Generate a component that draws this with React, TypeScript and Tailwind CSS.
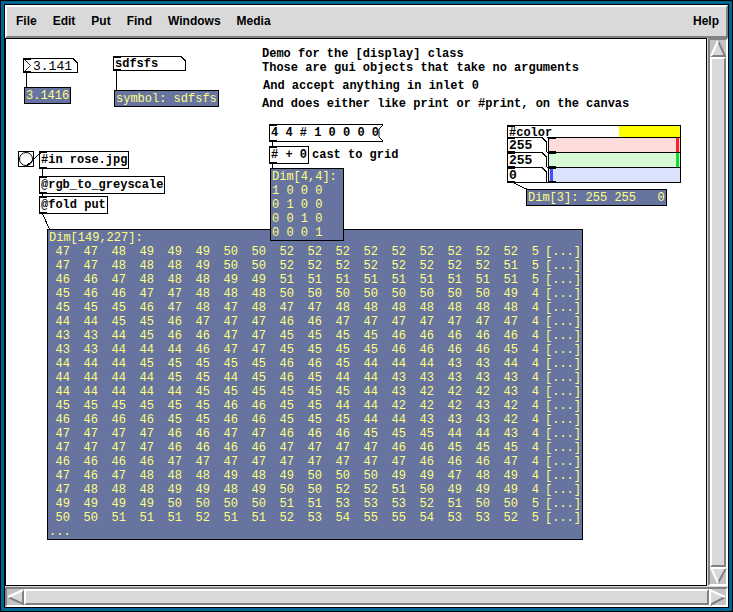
import React from 'react';
import clsx from 'clsx';

const MENUS = ['File', 'Edit', 'Put', 'Find', 'Windows', 'Media'];

const GRID_ROWS = [
  '47 47 48 49 49 49 50 50 52 52 52 52 52 52 52 52 52 5',
  '47 47 48 48 48 49 50 50 52 52 52 52 52 52 52 52 51 5',
  '46 46 47 48 48 48 49 49 51 51 51 51 51 51 51 51 51 5',
  '45 46 46 47 47 48 48 48 50 50 50 50 50 50 50 50 49 4',
  '45 45 45 46 47 48 47 48 47 47 48 48 48 48 48 48 48 4',
  '44 44 45 45 46 47 47 47 46 46 47 47 47 47 47 47 47 4',
  '43 43 44 45 46 46 47 47 45 45 45 45 46 46 46 46 46 4',
  '43 43 44 44 44 46 47 47 45 45 45 45 46 46 46 46 45 4',
  '44 44 44 45 45 45 45 45 46 46 45 44 44 44 43 43 44 4',
  '44 44 44 44 45 45 44 45 46 45 44 44 43 43 43 43 43 4',
  '44 44 44 44 44 45 45 45 45 45 45 44 43 42 42 42 43 4',
  '45 45 45 45 45 45 46 46 45 45 44 44 42 42 42 43 42 4',
  '46 46 46 46 45 45 46 46 45 45 45 44 44 43 43 43 42 4',
  '47 47 47 47 46 46 47 47 46 46 46 45 45 45 44 44 43 4',
  '47 47 47 47 46 46 46 46 47 47 47 47 46 46 45 45 45 4',
  '46 46 46 46 47 47 47 47 47 47 47 47 47 46 46 46 47 4',
  '47 46 47 48 48 48 49 48 49 50 50 50 49 49 47 48 49 4',
  '47 48 48 48 49 49 48 49 50 50 52 52 51 50 49 49 49 4',
  '49 49 49 49 50 50 50 50 51 51 53 53 53 52 51 50 50 5',
  '50 50 51 51 51 52 51 51 52 53 54 55 55 54 53 53 52 5',
].map((row) => row.split(' '));

const CHANNELS = [
  {
    name: 'red',
    value: 255,
    track: 'bg-[#fddcdc]',
    thumb: '[&::-webkit-slider-thumb]:bg-[#ff2020]',
  },
  {
    name: 'green',
    value: 255,
    track: 'bg-[#d8fad8]',
    thumb: '[&::-webkit-slider-thumb]:bg-[#10e020]',
  },
  {
    name: 'blue',
    value: 0,
    track: 'bg-[#dae2fc]',
    thumb: '[&::-webkit-slider-thumb]:bg-[#4050ff]',
  },
];

// from x, from y, to x, to y on the canvas
const WIRES = [
  [20, 34, 20, 48],
  [110, 32, 110, 51],
  [20, 127, 35, 113],
  [36, 130, 36, 137],
  [36, 155, 36, 157],
  [36, 175, 43, 190],
  [266, 103, 266, 107],
  [266, 125, 266, 129],
  [505, 143, 520, 150],
];

const Xlets = () => (
  <>
    <span className="absolute left-0 top-0 h-px w-[7px] bg-black" />
    <span className="absolute bottom-0 left-0 h-px w-[7px] bg-black" />
  </>
);

// cut top right corner of an atom box
const Notch = () => (
  <svg className="absolute -right-px -top-px" width="5" height="5" shapeRendering="crispEdges">
    <path d="M0 0H5V5Z" fill="#fff" />
    <path d="M0 0.5L4.5 5" stroke="#000" fill="none" />
  </svg>
);

type BoxProps = {
  className?: string;
  children: React.ReactNode;
};

const ObjectBox = ({ className, children }: BoxProps) => (
  <div
    className={clsx(
      'absolute h-[18px] whitespace-pre border border-black bg-white px-px font-bold leading-4',
      className
    )}
  >
    <Xlets />
    {children}
  </div>
);

const Comment = ({ className, children }: BoxProps) => (
  <p className={clsx('absolute whitespace-pre font-bold leading-[14px]', className)}>{children}</p>
);

const Display = ({ className, children }: BoxProps) => (
  <output
    className={clsx(
      'absolute block whitespace-pre border border-black bg-[#6774a0] px-px pt-px leading-[14px] text-[#ffff80]',
      className
    )}
  >
    {children}
  </output>
);

type ArrowProps = {
  label: string;
  points: string;
  light: string;
  dark: string;
};

const ArrowButton = ({ label, points, light, dark }: ArrowProps) => (
  <button aria-label={label} className="block h-[17px] w-[17px] shrink-0">
    <svg width="17" height="17" viewBox="0 0 17 17" fill="none" strokeWidth="2">
      <polygon points={points} fill="#d9d9d9" />
      <path d={dark} stroke="#828282" />
      <path d={light} stroke="#fff" />
    </svg>
  </button>
);

const Thumb = () => (
  <div className="flex-1 border-2 border-b-[#828282] border-l-white border-r-[#828282] border-t-white bg-[#d9d9d9]" />
);

const ColorPicker = () => (
  <div className="absolute left-[501px] top-[86px] w-[174px] border border-black bg-white font-bold">
    <Xlets />
    <div className="flex h-3 border-b border-black">
      <span className="flex-1 pl-px leading-[15px]">#color</span>
      <span className="w-[61px] bg-[#ffff00]" />
    </div>
    {CHANNELS.map((channel, i) => (
      <div
        key={channel.name}
        className={clsx('flex', i < 2 ? 'h-[15px] border-b border-black' : 'h-[14px]')}
      >
        <div className="relative w-[39px] border-r border-black">
          <Xlets />
          <input
            aria-label={`${channel.name} value`}
            defaultValue={channel.value}
            className="block h-[14px] w-full bg-transparent px-px pt-px text-[13px] leading-[13px] outline-none"
          />
          <Notch />
        </div>
        <div className={clsx('relative ml-px flex-1 border-l border-black px-px', channel.track)}>
          <Xlets />
          <input
            type="range"
            aria-label={channel.name}
            min={0}
            max={255}
            defaultValue={channel.value}
            className={clsx(
              'block h-full w-full appearance-none bg-transparent outline-none [&::-webkit-slider-thumb]:h-[14px] [&::-webkit-slider-thumb]:w-[3px] [&::-webkit-slider-thumb]:appearance-none',
              channel.thumb
            )}
          />
        </div>
      </div>
    ))}
  </div>
);

const GridDump = () => (
  <div className="absolute left-[41px] top-[190px] w-[536px] border border-black bg-[#6774a0] px-px pt-px leading-[14px] text-[#ffff80]">
    <p>Dim[149,227]:</p>
    <table className="table-fixed border-collapse">
      <tbody>
        {GRID_ROWS.map((row, y) => (
          <tr key={y}>
            {row.map((value, x) => (
              <td
                key={x}
                className={clsx(
                  'h-[14px] p-0 text-right',
                  x === 0 || x === row.length - 1 ? 'w-[21px] min-w-[21px]' : 'w-7 min-w-7'
                )}
              >
                {value}
              </td>
            ))}
            <td className="h-[14px] w-[42px] min-w-[42px] p-0 text-right">[...]</td>
          </tr>
        ))}
      </tbody>
    </table>
    <p>...</p>
  </div>
);

const Canvas = () => (
  <main className="relative flex-1 overflow-hidden border border-black bg-white font-['Liberation_Mono',monospace] text-[12px] text-black">
    <div className="absolute left-[17px] top-[19px] h-[15px] w-[55px] border border-black bg-[#fcfcfc]">
      <Xlets />
      <svg className="absolute left-0 top-0" width="8" height="13" fill="none" stroke="#000">
        <path d="M0.5 0.5L6.5 6.5L0.5 12.5" strokeWidth="0.8" />
      </svg>
      <input
        aria-label="number"
        defaultValue="3.141"
        className="block h-[13px] w-full bg-transparent pl-[9px] pt-px text-[13px] leading-3 outline-none"
      />
      <Notch />
    </div>
    <Display className="left-[18px] top-12">3.1416</Display>

    <div className="absolute left-[107px] top-[17px] h-[15px] w-[73px] border border-black bg-white">
      <Xlets />
      <input
        aria-label="symbol"
        defaultValue="sdfsfs"
        className="block h-[13px] w-full bg-transparent px-px pt-px font-bold leading-3 outline-none"
      />
      <Notch />
    </div>
    <Display className="left-[108px] top-[51px]">symbol: sdfsfs</Display>

    <Comment className="left-64 top-2">
      {'Demo for the [display] class\nThose are gui objects that take no arguments'}
    </Comment>
    <Comment className="left-[257px] top-10">And accept anything in inlet 0</Comment>
    <Comment className="left-64 top-[58px]">
      And does either like print or #print, on the canvas
    </Comment>

    <button
      aria-label="bang"
      className="absolute left-3 top-28 h-4 w-4 border border-black bg-white"
    >
      <svg className="block" width="14" height="14" fill="none" stroke="#000">
        <circle cx="7" cy="7" r="6.5" />
      </svg>
    </button>
    <ObjectBox className="left-[33px] top-28">#in rose.jpg</ObjectBox>
    <ObjectBox className="left-[33px] top-[137px]">@rgb_to_greyscale</ObjectBox>
    <ObjectBox className="left-[33px] top-[157px]">@fold put</ObjectBox>
    <GridDump />

    <button className="absolute left-[263px] top-[85px] h-[18px] whitespace-pre border-y border-l border-black bg-white pl-px pr-1 text-left font-bold leading-4">
      <Xlets />
      4 4 # 1 0 0 0 0
      <svg className="absolute right-0 top-0" width="5" height="16" fill="none" stroke="#000">
        <path d="M5 0L1 4V12L5 16" />
      </svg>
    </button>
    <ObjectBox className="left-[263px] top-[107px]"># + 0</ObjectBox>
    <Comment className="left-[306px] top-[109px]">cast to grid</Comment>
    <Display className="left-[264px] top-[129px] w-[74px]">
      {'Dim[4,4]:\n1 0 0 0\n0 1 0 0\n0 0 1 0\n0 0 0 1'}
    </Display>

    <ColorPicker />
    <Display className="left-[520px] top-[150px]">{'Dim[3]: 255 255   0'}</Display>

    <svg
      className="pointer-events-none absolute inset-0 h-full w-full"
      stroke="#000"
      shapeRendering="crispEdges"
    >
      {WIRES.map(([x1, y1, x2, y2]) => (
        <line key={`${x1}-${y1}`} x1={x1 + 0.5} y1={y1} x2={x2 + 0.5} y2={y2} />
      ))}
    </svg>
  </main>
);

export default function App() {
  return (
    <div className="flex min-h-screen bg-black p-px">
      <div className="flex flex-1 flex-col border-3 border-[#006496]">
        <div className="flex flex-1 flex-col border border-black bg-[#d9d9d9]">
          <nav className="flex h-[33px] items-center gap-4 border-2 border-b-[#828282] border-l-white border-r-[#828282] border-t-white pb-px pl-[9px] pr-[7px] font-['Liberation_Sans',sans-serif] text-[12px] font-bold leading-4 text-black">
            {MENUS.map((menu) => (
              <button key={menu}>{menu}</button>
            ))}
            <button className="ml-auto">Help</button>
          </nav>
          <div className="flex flex-1">
            <Canvas />
            <div className="ml-px flex w-5 flex-col border-2 border-b-white border-l-[#828282] border-r-white border-t-[#828282] bg-[#c3c3c3]">
              <ArrowButton
                label="Scroll up"
                points="8,1 16,16 1,16"
                light="M1 16L8 1"
                dark="M8 1L15 16H1"
              />
              <Thumb />
              <ArrowButton
                label="Scroll down"
                points="1,1 16,1 8,16"
                light="M16 1H1L8 16"
                dark="M8 16L16 1"
              />
            </div>
          </div>
          <div className="mt-px flex h-5 border-2 border-b-white border-l-[#828282] border-r-white border-t-[#828282] bg-[#c3c3c3]">
            <ArrowButton
              label="Scroll left"
              points="1,8 16,1 16,16"
              light="M1 8L16 1"
              dark="M16 1V15L1 8"
            />
            <Thumb />
            <ArrowButton
              label="Scroll right"
              points="1,1 16,8 1,16"
              light="M1 16V1L16 8"
              dark="M1 16L16 8"
            />
          </div>
        </div>
      </div>
    </div>
  );
}
